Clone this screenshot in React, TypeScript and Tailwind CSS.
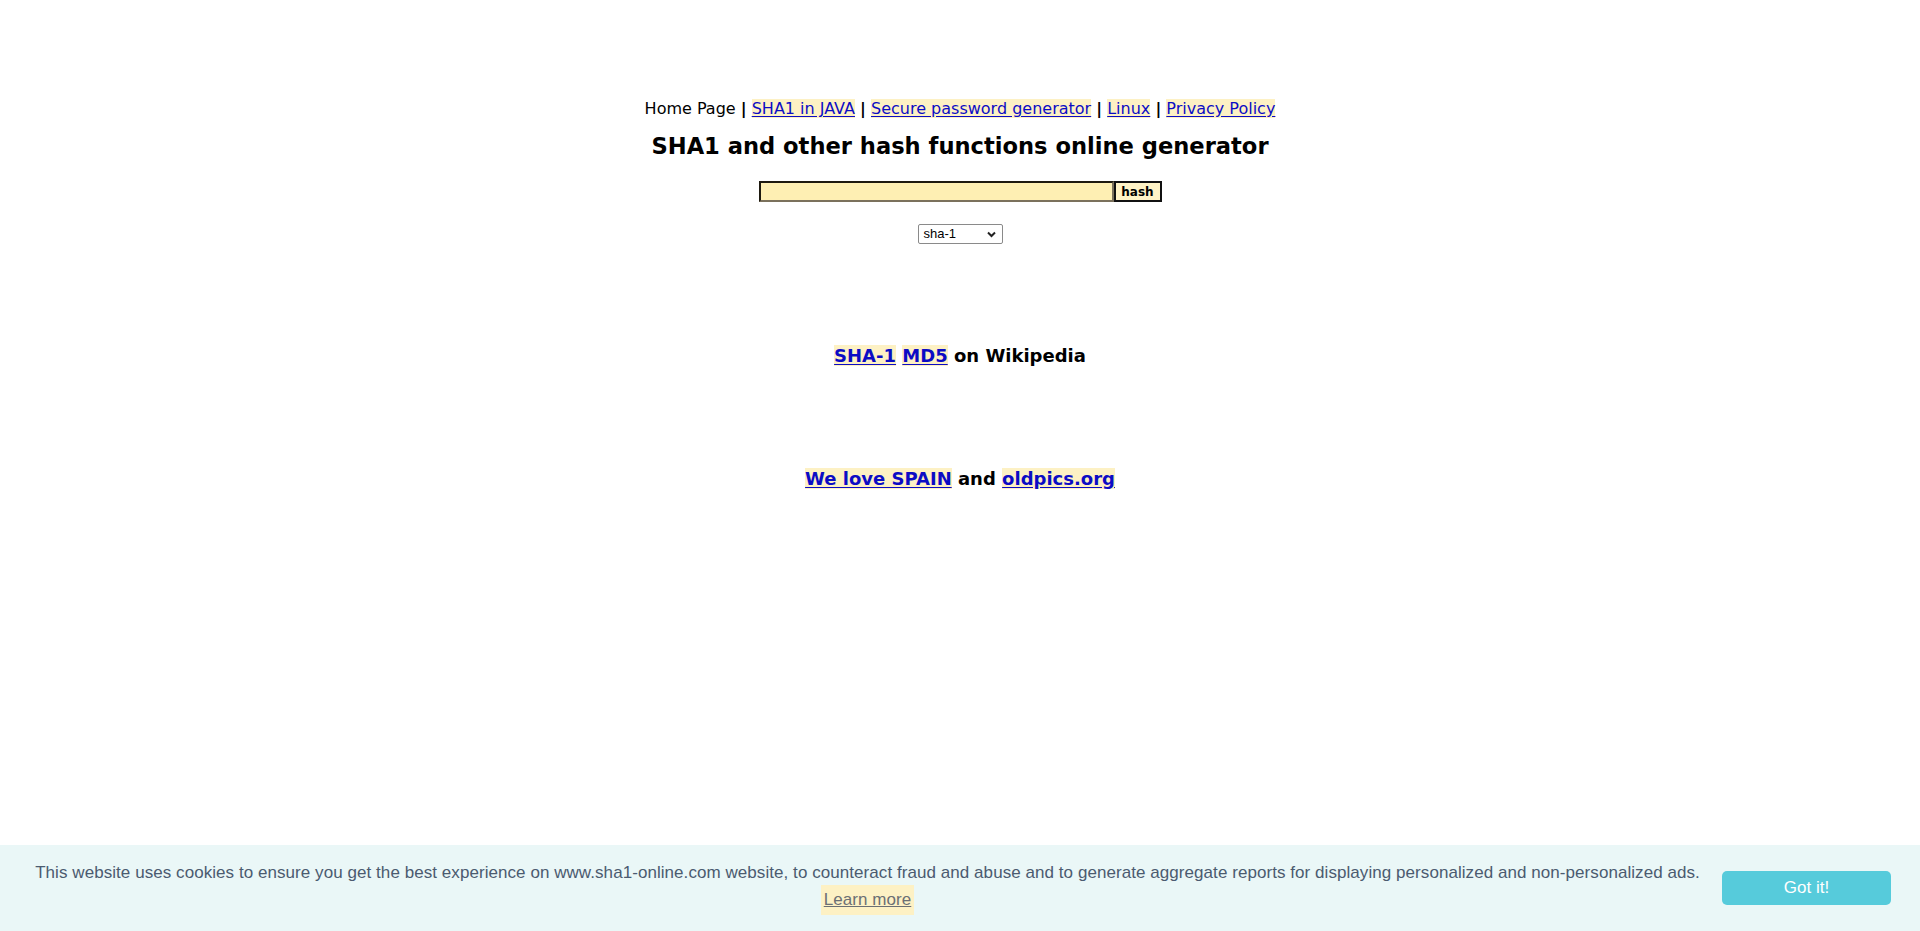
export default function App() {
  const link =
    "text-[#0c0cc4] underline bg-[#fdf1c4] underline-offset-2";

  return (
    <div className="min-h-[931px] bg-white font-['DejaVu_Sans',Verdana,sans-serif] text-black">
      <div className="flex flex-col items-center pt-[98px]">
        <div className="text-[16px] leading-[21px]">
          Home Page <span className="font-bold">|</span>{" "}
          <a href="#" className={link}>SHA1 in JAVA</a>{" "}
          <span className="font-bold">|</span>{" "}
          <a href="#" className={link}>Secure password generator</a>{" "}
          <span className="font-bold">|</span>{" "}
          <a href="#" className={link}>Linux</a>{" "}
          <span className="font-bold">|</span>{" "}
          <a href="#" className={link}>Privacy Policy</a>
        </div>

        <h1 className="mt-[13px] text-[22.6px] font-bold leading-[29px]">
          SHA1 and other hash functions online generator
        </h1>

        <form className="mt-[20px] flex" onSubmit={(e) => e.preventDefault()}>
          <input
            type="text"
            className="box-border h-[21px] w-[355px] border-2 border-t-[#1e1a10] border-l-[#1e1a10] border-b-[#7b715c] border-r-[#7b715c] bg-[#feefb3] px-1 text-[12px] outline-none"
          />
          <button
            type="submit"
            className="box-border h-[21px] w-[48px] border-2 border-[#111] bg-[#fff3c6] text-[12px] font-bold leading-none"
          >
            hash
          </button>
        </form>

        <div className="relative mt-[22px] h-[20px] w-[85px] rounded-[2px] border border-[#8a8a8a] bg-white font-['Liberation_Sans',Arial,sans-serif] text-[13px]">
          <span className="absolute left-[5px] top-[1px] leading-[16px]">sha-1</span>
          <svg
            className="absolute right-[6px] top-[6px]"
            width="9"
            height="7"
            viewBox="0 0 9 7"
          >
            <path d="M1 1.5 L4.5 5 L8 1.5" stroke="#222" strokeWidth="2" fill="none" />
          </svg>
        </div>

        <div className="mt-[100px] text-[18px] font-bold leading-[24px]">
          <a href="#" className={link}>SHA-1</a>{" "}
          <a href="#" className={link}>MD5</a> on Wikipedia
        </div>

        <div className="mt-[99px] text-[18px] font-bold leading-[24px]">
          <a href="#" className={link}>We love SPAIN</a> and{" "}
          <a href="#" className={link}>oldpics.org</a>
        </div>
      </div>

      <div className="fixed bottom-0 left-0 right-0 flex h-[86px] items-center bg-[#eaf7f7] px-[29px] font-['Liberation_Sans',Arial,sans-serif] text-[17px] tracking-[0.06px] text-[#4b5b70]">
        <div className="mr-[16px] flex-1 text-center leading-[24px]">
          This website uses cookies to ensure you get the best experience on www.sha1-online.com website, to counteract fraud and abuse and to generate aggregate reports for displaying personalized and non-personalized ads.{" "}
          <a
            href="#"
            className="inline-block bg-[#fdf1c4] px-[3px] py-[3px] text-[#6b6f74] underline"
          >
            Learn more
          </a>
        </div>
        <button className="h-[34px] w-[169px] rounded-[5px] bg-[#56cbdb] text-[17px] tracking-normal text-white">
          Got it!
        </button>
      </div>
    </div>
  );
}
